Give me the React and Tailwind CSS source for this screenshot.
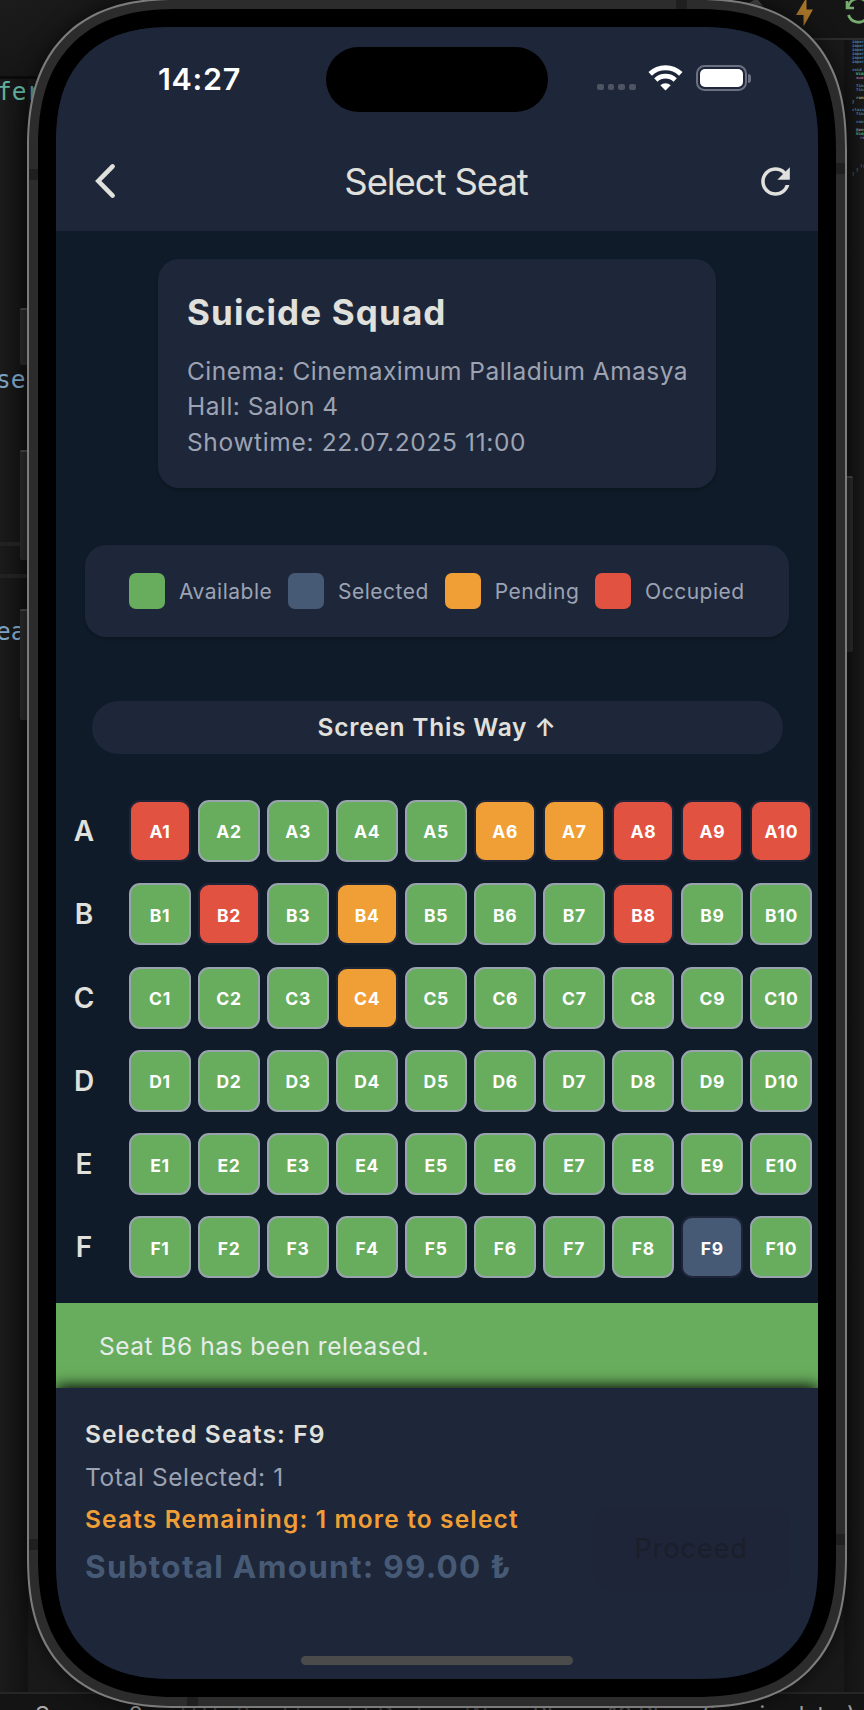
import { MdRefresh } from "react-icons/md";

const ROWS = ["A", "B", "C", "D", "E", "F"];
const COLUMNS = [1, 2, 3, 4, 5, 6, 7, 8, 9, 10];

const SEAT_STATES = {
  A1: "occupied",
  A6: "pending",
  A7: "pending",
  A8: "occupied",
  A9: "occupied",
  A10: "occupied",
  B2: "occupied",
  B4: "pending",
  B8: "occupied",
  C4: "pending",
  F9: "selected",
};

const SEAT_STYLES = {
  available: "bg-[#68ad5d] border-[#98a3ae]",
  occupied: "bg-[#e25241] border-[#1e2538]",
  pending: "bg-[#f09f37] border-[#1e2538]",
  selected: "bg-[#475a75] border-[#1e2538]",
};

const LEGEND = [
  { label: "Available", color: "bg-[#68ad5d]" },
  { label: "Selected", color: "bg-[#475a75]" },
  { label: "Pending", color: "bg-[#f09f37]" },
  { label: "Occupied", color: "bg-[#e25241]" },
];

const MINIMAP = [
  ["import", "text-[#4a7ba8]", 0],
  ["import", "text-[#4a7ba8]", 0],
  ["import", "text-[#4a7ba8]", 0],
  ["import", "text-[#4a7ba8]", 0],
  ["import", "text-[#4a7ba8]", 0],
  ["import", "text-[#4a7ba8]", 0],
  ["", "", 0],
  ["void m", "text-[#4a7ba8]", 0],
  ["Widg", "text-[#3fa08a]", 4],
  ["awai", "text-[#9a5f96]", 4],
  ["", "", 0],
  ["final", "text-[#4a7ba8]", 4],
  ["final", "text-[#4a7ba8]", 4],
  ["", "", 0],
  ["runA", "text-[#a5a57c]", 4],
  ["}", "text-[#8a8a8a]", 0],
  ["", "", 0],
  ["class", "text-[#4a7ba8]", 0],
  ["fina", "text-[#4a7ba8]", 4],
  ["", "", 0],
  ["cons", "text-[#4a7ba8]", 4],
  ["", "", 0],
  ["@ove", "text-[#7f9fb4]", 4],
  ["Widg", "text-[#3fa08a]", 4],
  ["re", "text-[#9a5f96]", 8],
  ["", "", 0],
  ["", "", 0],
  ["", "", 0],
  ["", "", 0],
  ["", "", 0],
  ["", "", 0],
  [");", "text-[#6a6a6a]", 8],
  ["}", "text-[#6a6a6a]", 4],
  ["}", "text-[#6a6a6a]", 0],
];

function EditorBackdrop() {
  return (
    <div className="absolute inset-0 overflow-hidden bg-[#191919]">
      <div className="absolute inset-y-0 left-0 w-7 bg-linear-to-r from-[#1b1b1b] to-[#121212]" />
      <div className="absolute inset-y-0 right-0 w-5 bg-linear-to-l from-[#191919] to-[#131313]" />
      <div className="absolute left-0 top-0 h-[76px] w-40 bg-linear-to-br from-[#1c1c1c] to-[#111111]" />
      <div className="absolute left-0 top-[76px] h-[3px] w-10 bg-[#0b0b0b]" />
      <div className="absolute right-0 top-0 h-[38px] w-32 bg-[#151515]" />
      <div className="absolute right-0 top-[38px] h-[2px] w-14 bg-[#2c2c2c]" />
      <div className="absolute left-0 top-[542px] h-1 w-7 bg-[#222222]" />
      <div className="absolute left-0 top-[574px] h-1 w-7 bg-[#222222]" />
      <div className="absolute inset-x-0 top-[1692px] h-[2px] bg-[#262626]" />
      <div className="absolute inset-x-0 top-[1694px] h-4 bg-[#141414]" />

      <div className="absolute -left-[3px] top-[76px] font-['DejaVu_Sans_Mono',monospace] text-[24.5px] leading-8 text-[#5fb09d]">fer</div>
      <div className="absolute -left-1 top-[364px] font-['DejaVu_Sans_Mono',monospace] text-[24.5px] leading-8 text-[#7ba3c4]">se</div>
      <div className="absolute -left-1 top-[616px] font-['DejaVu_Sans_Mono',monospace] text-[24.5px] leading-8 text-[#7ba3c4]">ea</div>

      <svg className="absolute left-[748px] top-0 h-[27px] w-[116px]" viewBox="0 0 116 27">
        <path d="M1 3 L6 0 H10 L15 6 Z" fill="#4a4a4a" />
        <path d="M57 0 L48 15 H55.500 L55.500 26.500 L65 9.500 H58.500 V0 Z" fill="#a87529" />
        <path d="M99 1 V8 H106" fill="none" stroke="#78ac6f" strokeWidth="2.600" />
        <path d="M100 7 A10.500 10.500 0 0 1 120 5 M100.500 15 A10.500 10.500 0 0 0 118 19" fill="none" stroke="#78ac6f" strokeWidth="2.800" />
      </svg>

      <div className="absolute left-[852px] top-10 flex w-[40px] flex-col font-['DejaVu_Sans_Mono',monospace] text-[4px] font-bold">
        {MINIMAP.map(([text, color, indent], i) => (
          <span key={i} className={`h-1 whitespace-nowrap leading-[4px] ${color}`} style={{ paddingLeft: indent }}>
            {text}
          </span>
        ))}
      </div>

      <div className="absolute left-[35px] top-[1701px] font-['Inter',sans-serif] text-[23px] leading-[28px] whitespace-nowrap text-[#a8a8a8]">Spaces: 2</div>
      <div className="absolute left-[180px] top-[1701px] font-['Inter',sans-serif] text-[23px] leading-[28px] whitespace-nowrap text-[#4a4a4a]">UTF-8</div>
      <div className="absolute left-[282px] top-[1701px] font-['Inter',sans-serif] text-[23px] leading-[28px] whitespace-nowrap text-[#4a4a4a]">LF</div>
      <div className="absolute left-[345px] top-[1701px] font-['Inter',sans-serif] text-[23px] leading-[28px] whitespace-nowrap text-[#4a4a4a]">{"{ }"} Dart</div>
      <div className="absolute left-[465px] top-[1701px] font-['Inter',sans-serif] text-[23px] leading-[28px] whitespace-nowrap text-[#4a4a4a]">Win</div>
      <div className="absolute left-[527px] top-[1701px] font-['Inter',sans-serif] text-[23px] leading-[28px] whitespace-nowrap text-[#5a5a5a]">iPhone 16 Plus</div>
      <div className="absolute left-[701px] top-[1701px] font-['Inter',sans-serif] text-[23px] leading-[28px] whitespace-nowrap text-[#a0a0a0]">(ios simulator)</div>

      <div className="absolute left-5 top-[308px] h-[57px] w-3 rounded-l-[2px] border-t-2 border-[#4a4a4a] bg-[#2b2b2b]" />
      <div className="absolute left-5 top-[450px] h-[110px] w-3 rounded-l-[2px] border-t-2 border-[#4a4a4a] bg-[#2b2b2b]" />
      <div className="absolute left-5 top-[609px] h-[111px] w-3 rounded-l-[2px] border-t-2 border-[#4a4a4a] bg-[#2b2b2b]" />
      <div className="absolute left-[842px] top-[476px] h-[176px] w-[11px] rounded-r-[2px] border-t-2 border-[#4a4a4a] bg-[#2b2b2b]" />
    </div>
  );
}

function AntennaBands() {
  return (
    <>
      <div className="absolute left-0 top-[169px] h-[11px] w-[9px] bg-[#1f1f1f]" />
      <div className="absolute left-0 top-[1539px] h-[11px] w-[9px] bg-[#1f1f1f]" />
      <div className="absolute right-0 top-[163px] h-[11px] w-[9px] bg-[#1f1f1f]" />
      <div className="absolute right-0 top-[1534px] h-[11px] w-[9px] bg-[#1f1f1f]" />
      <div className="absolute left-[647px] top-0 h-[9px] w-[11px] bg-[#1f1f1f]" />
      <div className="absolute bottom-0 left-[158px] h-[9px] w-[11px] bg-[#1f1f1f]" />
    </>
  );
}

function StatusBar() {
  return (
    <div className="mt-5 grid h-[65px] grid-cols-[270px_222px_270px]">
      <div className="flex items-center pb-[2px] pl-[102px] text-[30.5px] font-semibold tracking-[0.7px] text-white">14:27</div>
      <div className="rounded-full bg-black" />
      <div className="flex items-center pl-[49px]">
        <div className="mt-[15px] flex gap-[4.2px]">
          {[0, 1, 2, 3].map((i) => (
            <span key={i} className="h-[6.5px] w-[6.5px] rounded-[2px] bg-[#4f5463]" />
          ))}
        </div>
        <svg className="-mt-[3px] ml-[12px] h-[26px] w-[35px]" viewBox="0 0 35 26" fill="none">
          <path d="M2.200 8.900 A22 22 0 0 1 32.800 8.900" stroke="#fff" strokeWidth="5" />
          <path d="M7.800 15 A14.200 14.200 0 0 1 27.200 15" stroke="#fff" strokeWidth="4.800" />
          <path d="M17.500 25.500 L12.300 20.300 A7.500 7.500 0 0 1 22.700 20.300 Z" fill="#fff" />
        </svg>
        <div className="-mt-[3px] ml-[13px] flex items-center gap-[1.500px]">
          <div className="h-[26px] w-[51px] rounded-[8.500px] border-2 border-[#6c7182] p-[2px]">
            <div className="h-full w-full rounded-[5px] bg-white" />
          </div>
          <div className="h-[9px] w-[3px] rounded-r-[3px] bg-[#6c7182]" />
        </div>
      </div>
    </div>
  );
}

function NavBar() {
  return (
    <div className="mt-[19px] grid h-[100px] grid-cols-[100px_1fr_100px] items-center text-[#e0e0dc]">
      <svg className="ml-[38px] h-[36px] w-[22px]" viewBox="0 0 22 36" fill="none">
        <path d="M18.600 3.400 L4.300 18 L18.600 32.600" stroke="currentColor" strokeWidth="4.600" strokeLinecap="round" strokeLinejoin="miter" />
      </svg>
      <h1 className="pr-[2px] pt-[2px] text-center text-[36.5px] leading-[44px] tracking-[-1.1px]">Select Seat</h1>
      <MdRefresh className="ml-[36px] h-[43px] w-[43px]" />
    </div>
  );
}

function Seat({ id }) {
  const state = SEAT_STATES[id] || "available";
  return (
    <button
      className={`flex h-[62px] w-[62px] items-center justify-center rounded-[11px] border-2 pt-[3px] text-[17.5px] font-bold tracking-[0.7px] text-white ${SEAT_STYLES[state]}`}
    >
      {id}
    </button>
  );
}

export default function App() {
  return (
    <div className="relative h-[1710px] w-[864px] overflow-hidden font-['Inter',sans-serif]">
      <EditorBackdrop />
      <div className="relative -mt-0.5 ml-[27px] h-[1710px] w-[820px] overflow-hidden rounded-[152px] border-2 border-[#7c7c7c] bg-[#2c2c2c] p-[9px] shadow-[0_0_20px_rgba(0,0,0,0.6)] [corner-shape:superellipse(1.3)]">
        <AntennaBands />
        <div className="h-[1688px] rounded-[141px] bg-black p-[18px] [corner-shape:superellipse(1.3)]">
          <div className="flex h-[1652px] w-[762px] flex-col overflow-hidden rounded-[118px] bg-[#0f1b28] [corner-shape:superellipse(1.3)]">
            <header className="flex h-[204px] shrink-0 flex-col bg-[#1e2639]">
              <StatusBar />
              <NavBar />
            </header>

            <main className="flex h-[1072px] shrink-0 flex-col items-center">
              <section className="mt-7 h-[229px] w-[558px] rounded-[21px] bg-[#1e2639] pl-[29px] pt-[31px] shadow-[0_2px_3px_rgba(0,0,0,0.2)]">
                <h2 className="text-[35px] font-bold leading-[44px] tracking-[1.15px] text-[#e0e0dc]">Suicide Squad</h2>
                <div className="mt-[19.500px] whitespace-nowrap text-[24.5px] leading-[35.5px] text-[#9ca3b3]">
                  <p className="tracking-[0.46px]">Cinema: Cinemaximum Palladium Amasya</p>
                  <p className="tracking-[0.5px]">Hall: Salon 4</p>
                  <p className="tracking-[0.65px]">Showtime: 22.07.2025 11:00</p>
                </div>
              </section>

              <section className="mt-[56.500px] flex h-[92px] w-[704px] items-center gap-[15.8px] rounded-[21px] bg-[#1e2639] pl-11 shadow-[0_2px_3px_rgba(0,0,0,0.2)]">
                {LEGEND.map(({ label, color }) => (
                  <div key={label} className="flex items-center gap-[14px]">
                    <span className={`h-9 w-9 rounded-[7px] ${color}`} />
                    <span className="pt-[2px] text-[21px] tracking-[0.5px] text-[#9ca3b3]">{label}</span>
                  </div>
                ))}
              </section>

              <div className="mt-[64px] flex h-[53px] w-[691px] items-center justify-center rounded-full bg-[#1e2639] text-[24.5px] font-semibold tracking-[0.75px] text-[#e0e0dc]">
                Screen This Way ↑
              </div>

              <div className="mt-[46.500px] flex w-full flex-col gap-[21.300px]">
                {ROWS.map((row) => (
                  <div key={row} className="flex h-[62px] items-center">
                    <span className="mr-[17px] w-14 text-center text-[28px] font-semibold text-[#e0e0dc]">{row}</span>
                    <div className="flex gap-[7.050px]">
                      {COLUMNS.map((column) => (
                        <Seat key={column} id={`${row}${column}`} />
                      ))}
                    </div>
                  </div>
                ))}
              </div>
            </main>

            <div className="h-[85px] shrink-0 bg-[#68ad5d] pl-[43px] pt-[25px] text-[24.5px] leading-[36px] tracking-[0.52px] text-[#e6ece8]">
              Seat B6 has been released.
            </div>

            <footer className="relative flex h-[291px] shrink-0 flex-col bg-[#1e2639] shadow-[0_-2px_14px_rgba(0,0,0,1)]">
              <div className="flex h-[204px] justify-between pl-[29px] pr-7 pt-[25px]">
                <div className="whitespace-nowrap text-[24.5px] leading-[42.700px]">
                  <p className="font-semibold tracking-[1.1px] text-[#e0e0dc]">Selected Seats: F9</p>
                  <p className="tracking-[0.6px] text-[#9ca3b3]">Total Selected: 1</p>
                  <p className="font-semibold tracking-[1.15px] text-[#f09f37]">Seats Remaining: 1 more to select</p>
                  <p className="text-[31.5px] font-bold leading-[51.400px] tracking-[1.25px] text-[#475a75]">Subtotal Amount: 99.00 ₺</p>
                </div>
                <button className="mt-[93px] h-[85px] w-[198px] rounded-[21px] bg-[#1f2538] text-[27.500px] tracking-[0.7px] text-[#1b1f2b]">
                  Proceed
                </button>
              </div>
              <div className="ml-[245px] mt-[64px] h-[9px] w-[272px] rounded-full bg-[#4b4b4b]" />
            </footer>
          </div>
        </div>
      </div>
    </div>
  );
}
